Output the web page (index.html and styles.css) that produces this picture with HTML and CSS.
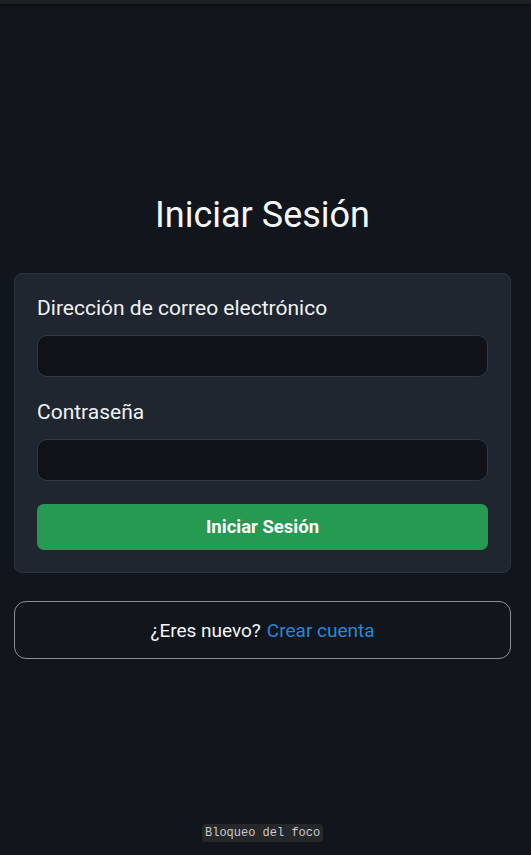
FILE: index.html
```html
<!DOCTYPE html>
<html lang="es">
<head>
<meta charset="utf-8">
<title>Iniciar Sesión</title>
<link rel="stylesheet" href="styles.css">
</head>
<body>
<div class="topbar"></div>
<main class="page">
  <h1 class="title">Iniciar Sesión</h1>
  <form class="card">
    <label class="label" for="email">Dirección de correo electrónico</label>
    <input class="input" id="email" type="email">
    <label class="label label-gap" for="pass">Contraseña</label>
    <input class="input" id="pass" type="password">
    <button class="btn" type="button">Iniciar Sesión</button>
  </form>
  <div class="signup">¿Eres nuevo? <a class="link" href="#">Crear cuenta</a></div>
</main>
<div class="focus-tag">Bloqueo del foco</div>
</body>
</html>
```
FILE: styles.css
```css
* { box-sizing: border-box; }
html, body { margin: 0; padding: 0; }
body {
  background: #11151c;
  font-family: Roboto, "Noto Sans", sans-serif;
  color: #f0f3f6;
  min-height: 855px;
}
.topbar {
  height: 4px;
  background: #1e2023;
  box-shadow: 0 1px 3px rgba(0,0,0,0.4);
}
.page {
  display: flex;
  flex-direction: column;
  padding: 190px 20px 0 14px;
}
.title {
  margin: 0;
  font-weight: 400;
  font-size: 36px;
  line-height: 42px;
  text-align: center;
  color: #f5f7fa;
}
.card {
  margin-top: 37px;
  display: flex;
  flex-direction: column;
  background: #1f2630;
  border: 1px solid #2c333d;
  border-radius: 8px;
  padding: 22px 22px 22px 22px;
}
.label {
  font-size: 21px;
  line-height: 24px;
  color: #f0f3f6;
}
.label-gap { margin-top: 23px; }
.input {
  margin-top: 15px;
  height: 42px;
  background: #10141a;
  border: 1px solid #2f3844;
  border-radius: 10px;
  color: #fff;
  font-size: 18px;
  padding: 0 12px;
  outline: none;
}
.btn {
  margin-top: 23px;
  height: 46px;
  background: #269952;
  border: none;
  border-radius: 7px;
  color: #ffffff;
  font-family: Roboto, "Noto Sans", sans-serif;
  font-size: 18.5px;
  font-weight: 700;
}
.signup {
  margin-top: 28px;
  height: 58px;
  display: flex;
  align-items: center;
  justify-content: center;
  gap: 6px;
  border: 1px solid #8a8f96;
  border-radius: 12px;
  font-size: 19px;
  color: #f5f7fa;
}
.link {
  color: #2b86d4;
  text-decoration: none;
}
.focus-tag {
  position: fixed;
  left: 202px;
  top: 824px;
  padding: 2px 3px;
  background: #262729;
  border-radius: 4px;
  font-family: "Liberation Mono", monospace;
  font-size: 12px;
  line-height: 14px;
  color: #c9ccd0;
}
```
